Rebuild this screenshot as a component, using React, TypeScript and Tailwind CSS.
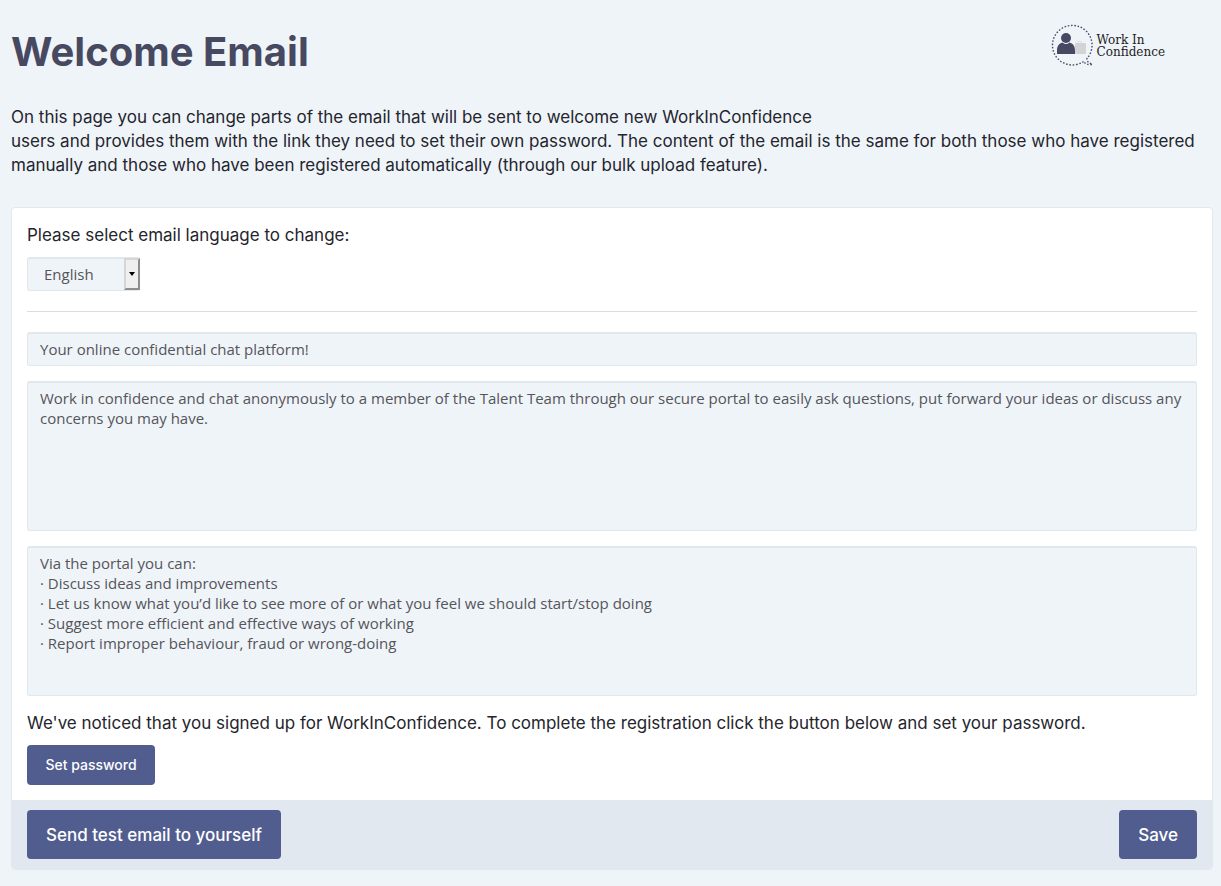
import { useState } from "react";

const fieldClass =
  "block w-full resize-none rounded-[3px] border border-t-2 border-[#dfe7ef] bg-[#eff4f9] px-3 font-['Open_Sans',sans-serif] text-[15px] leading-5 text-[#55555a] outline-none";

function Logo() {
  return (
    <a href="#home" aria-label="Work In Confidence" className="mt-0.5 flex items-center gap-0.5 text-[#222]">
      <svg width="46" height="44" viewBox="0 0 46 44" fill="none" aria-hidden="true">
        <path
          d="M34.5 37.5A19.8 19.8 0 1 1 38.2 34.2C37 36 38.5 38.5 43.5 40.5C39.5 41 36.500 40 34.500 37.500"
          stroke="#4a4b66"
          strokeWidth="1.400"
          strokeDasharray="1.600 1.700"
        />
        <rect x="26" y="19" width="11" height="11" rx="1" fill="#d2d3d7" />
        <path d="M28.500 19v-1.500h4V19" stroke="#dfe1e5" />
        <circle cx="17" cy="14" r="5" fill="#474862" />
        <path d="M8 30V26.500C8 22 10 19.500 13.500 18.500Q17 21.500 20.500 18.500C24 19.500 26 22 26 26.500V30Z" fill="#474862" />
      </svg>
      <span className="font-['DejaVu_Serif',serif] text-[12px] leading-3">
        Work In
        <br />
        Confidence
      </span>
    </a>
  );
}

export default function App() {
  const [language, setLanguage] = useState("English");
  const [subject, setSubject] = useState("Your online confidential chat platform!");
  const [intro, setIntro] = useState(
    "Work in confidence and chat anonymously to a member of the Talent Team through our secure portal to easily ask questions, put forward your ideas or discuss any concerns you may have."
  );
  const [details, setDetails] = useState(
    "Via the portal you can:\n· Discuss ideas and improvements\n· Let us know what you’d like to see more of or what you feel we should start/stop doing\n· Suggest more efficient and effective ways of working\n· Report improper behaviour, fraud or wrong-doing"
  );

  return (
    <div className="min-h-screen bg-[#eff4f9] pb-4 pl-[11px] pr-2 font-[Inter,sans-serif] text-[17px] leading-6 text-[#24252d]">
      <header className="flex items-start justify-between pr-12 pt-[22px]">
        <h1 className="text-[40px] font-bold leading-[60px] text-[#474960]">Welcome Email</h1>
        <Logo />
      </header>

      <p className="mt-[23px] pr-2">
        On this page you can change parts of the email that will be sent to welcome new WorkInConfidence
        <br />
        users and provides them with the link they need to set their own password. The content of the email is the
        same for both those who have registered manually and those who have been registered automatically (through
        our bulk upload feature).
      </p>

      <form
        className="mt-[30px] overflow-hidden rounded-[4px] border border-[#e1e8f0] bg-white"
        onSubmit={(event) => event.preventDefault()}
      >
        <div className="p-[15px]">
          <label htmlFor="language" className="block">
            Please select email language to change:
          </label>
          <div className="relative mt-2.5 w-[113px]">
            <select
              id="language"
              value={language}
              onChange={(event) => setLanguage(event.target.value)}
              className="block h-[34px] w-full appearance-none rounded-[3px] border border-t-2 border-[#dfe7ef] bg-[#eff4f9] pb-0.5 pl-4 font-['Open_Sans',sans-serif] text-[15px] text-[#55555a] outline-none"
            >
              <option>English</option>
              <option>French</option>
            </select>
            <span className="pointer-events-none absolute right-0 top-px flex h-8 w-4 items-center justify-center border-2 border-b-[#8d8d8d] border-l-[#d6d6d6] border-r-[#8d8d8d] border-t-[#d6d6d6] bg-[#efefef]">
              <svg width="6" height="4" viewBox="0 0 6 4" aria-hidden="true">
                <path d="M0 0h6L3 4z" fill="#000" />
              </svg>
            </span>
          </div>

          <hr className="my-5 border-[#dadcdd]" />

          <div className="flex flex-col gap-[15px]">
            <input
              type="text"
              aria-label="Email subject"
              value={subject}
              onChange={(event) => setSubject(event.target.value)}
              className={`${fieldClass} h-[34px] pb-0.5`}
            />
            <textarea
              aria-label="Introduction"
              value={intro}
              onChange={(event) => setIntro(event.target.value)}
              className={`${fieldClass} h-[150px] py-[5px]`}
            />
            <textarea
              aria-label="Portal details"
              value={details}
              onChange={(event) => setDetails(event.target.value)}
              className={`${fieldClass} h-[150px] py-[5px]`}
            />
          </div>

          <p className="mt-[15px]">
            We've noticed that you signed up for WorkInConfidence. To complete the registration click the button below
            and set your password.
          </p>
          <button
            type="button"
            className="mt-2.5 block h-10 w-32 rounded-[4px] bg-[#515d8f] text-[14px] font-medium text-white"
          >
            Set password
          </button>
        </div>

        <footer className="flex justify-between bg-[#e1e8f0] px-[15px] py-2.5">
          <button type="button" className="h-[49px] rounded-[4px] bg-[#515d8f] px-[19px] font-medium text-white">
            Send test email to yourself
          </button>
          <button type="submit" className="h-[49px] rounded-[4px] bg-[#515d8f] px-[19px] font-medium text-white">
            Save
          </button>
        </footer>
      </form>
    </div>
  );
}
